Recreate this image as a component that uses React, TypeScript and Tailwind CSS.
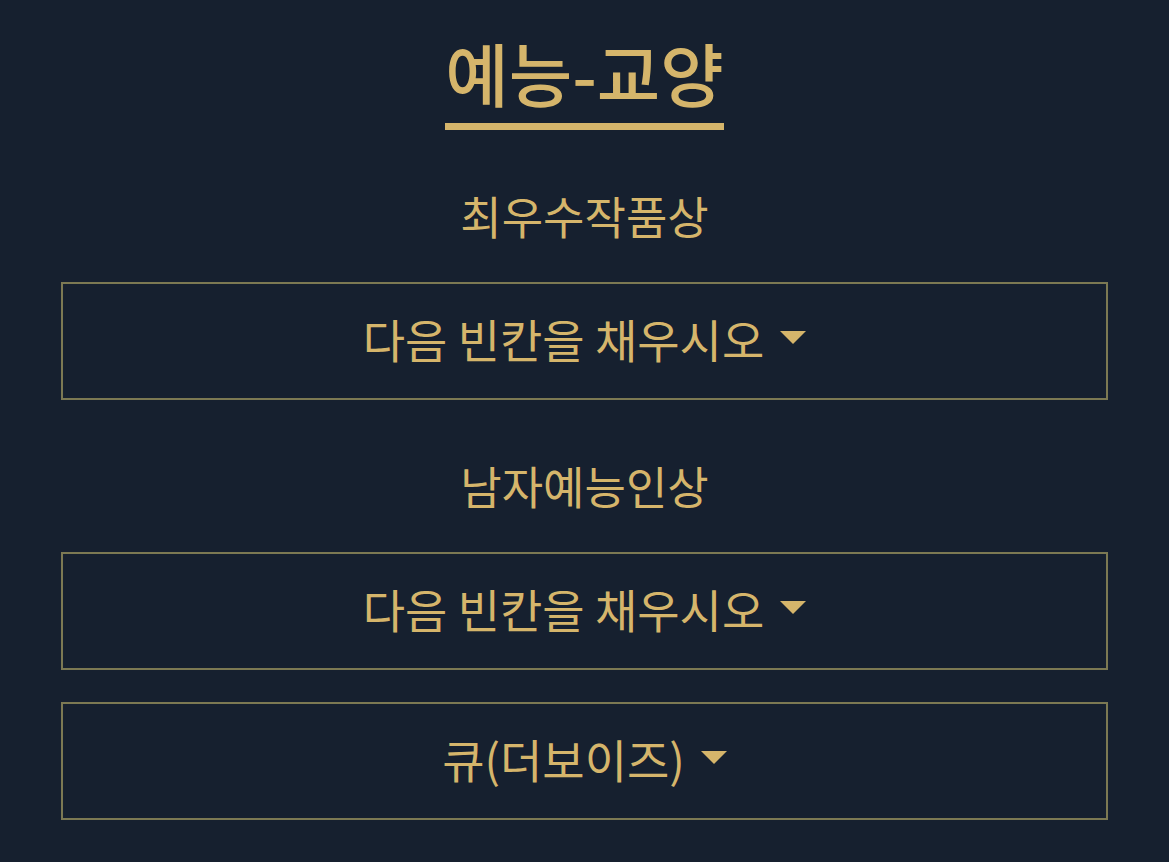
import React from 'react';

const GOLD = 'text-[#d5b56b]';

// Dropdown caret
const Caret = () => (
  <svg width="26" height="13" viewBox="0 0 26 13" className="ml-4 shrink-0">
    <path d="M0 0 L26 0 L13 13 Z" fill="#d5b56b" />
  </svg>
);

const SelectBox = ({ label }: { label: string }) => (
  <div className="mt-8 h-[118px] pb-[7px] border-2 border-[#7c7953] flex items-center justify-center">
    <span className={`text-[46px] leading-none ${GOLD}`}>{label}</span>
    <Caret />
  </div>
);

const SectionLabel = ({ children }: { children: React.ReactNode }) => (
  <div className={`mt-14 h-16 pb-1 flex items-center justify-center text-[45px] ${GOLD}`}>{children}</div>
);

export default function App() {
  return (
    <div
      className="min-h-screen bg-[#16202f] px-[61px] pt-[32px]"
      style={{ fontFamily: '"Noto Sans CJK KR", "Noto Sans", sans-serif' }}
    >
      <div className="text-center">
        <h1 className={`inline-block text-[69px] leading-[80px] font-medium pb-[11px] border-b-[7px] border-[#d5b56b] ${GOLD}`}>
          예능-교양
        </h1>
      </div>

      <SectionLabel>최우수작품상</SectionLabel>
      <SelectBox label="다음 빈칸을 채우시오" />

      <SectionLabel>남자예능인상</SectionLabel>
      <SelectBox label="다음 빈칸을 채우시오" />
      <SelectBox label="큐(더보이즈)" />
    </div>
  );
}
